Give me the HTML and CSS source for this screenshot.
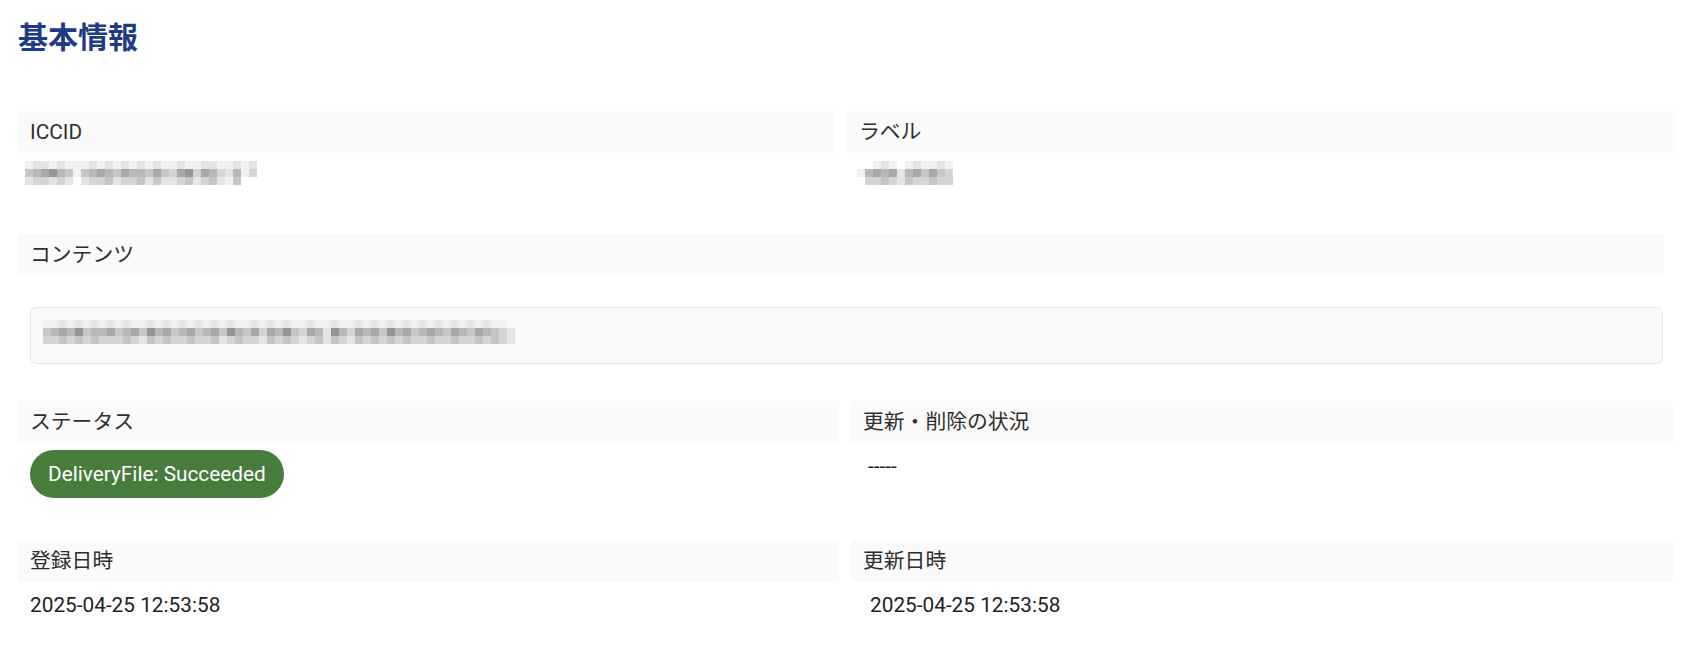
FILE: index.html
```html
<!DOCTYPE html>
<html lang="ja">
<head>
<meta charset="utf-8">
<title>基本情報</title>
<link rel="stylesheet" href="styles.css">
</head>
<body>
<div class="page">
  <h1 class="title">基本情報</h1>

  <div class="row row-a">
    <div class="field">
      <div class="label">ICCID</div>
      <div class="value pad-7">
        <div class="mosaic">
          <span class="mc t1 m4 b2"></span><span class="mc t2 m5 b3"></span><span class="mc t2 m6 b3"></span><span class="mc t1 m7 b2"></span><span class="mc t2 m5 b3"></span><span class="mc t1 m4 b2"></span><span class="mc t1 m1 b0"></span><span class="mc t1 m4 b2"></span><span class="mc t2 m5 b3"></span><span class="mc t1 m6 b3"></span><span class="mc t2 m5 b4"></span><span class="mc t1 m4 b2"></span><span class="mc t2 m6 b3"></span><span class="mc t1 m5 b3"></span><span class="mc t2 m5 b4"></span><span class="mc t1 m4 b2"></span><span class="mc t2 m6 b4"></span><span class="mc t1 m4 b2"></span><span class="mc t1 m3 b2"></span><span class="mc t2 m6 b3"></span><span class="mc t1 m7 b4"></span><span class="mc t1 m3 b2"></span><span class="mc t2 m6 b3"></span><span class="mc t2 m5 b4"></span><span class="mc t1 m3 b2"></span><span class="mc t1 m2 b1"></span><span class="mc t2 m5 b4"></span><span class="mc t1 m1 b0"></span><span class="mc t2 m3 b0"></span>
        </div>
      </div>
    </div>
    <div class="field">
      <div class="label">ラベル</div>
      <div class="value pad-10">
        <div class="mosaic">
          <span class="mc t0 m1 b0"></span><span class="mc t0 m5 b3"></span><span class="mc t1 m6 b3"></span><span class="mc t2 m5 b4"></span><span class="mc t1 m6 b3"></span><span class="mc t0 m2 b2"></span><span class="mc t1 m5 b4"></span><span class="mc t2 m6 b3"></span><span class="mc t1 m4 b3"></span><span class="mc t1 m6 b4"></span><span class="mc t2 m4 b3"></span><span class="mc t1 m3 b3"></span>
        </div>
      </div>
    </div>
  </div>

  <div class="field field-wide">
    <div class="label">コンテンツ</div>
    <div class="content-wrap">
      <div class="content-box">
        <div class="mosaic">
          <span class="mc t1 m4 b3"></span><span class="mc t1 m5 b3"></span><span class="mc t2 m6 b4"></span><span class="mc t1 m5 b3"></span><span class="mc t2 m7 b4"></span><span class="mc t1 m4 b3"></span><span class="mc t2 m5 b4"></span><span class="mc t1 m5 b3"></span><span class="mc t2 m6 b3"></span><span class="mc t1 m4 b3"></span><span class="mc t2 m5 b4"></span><span class="mc t1 m6 b3"></span><span class="mc t1 m4 b2"></span><span class="mc t2 m7 b4"></span><span class="mc t1 m5 b3"></span><span class="mc t2 m6 b4"></span><span class="mc t1 m4 b3"></span><span class="mc t2 m5 b3"></span><span class="mc t1 m6 b4"></span><span class="mc t2 m4 b3"></span><span class="mc t1 m5 b3"></span><span class="mc t2 m6 b4"></span><span class="mc t1 m4 b2"></span><span class="mc t2 m7 b3"></span><span class="mc t1 m5 b4"></span><span class="mc t1 m4 b3"></span><span class="mc t2 m6 b3"></span><span class="mc t1 m3 b2"></span><span class="mc t2 m6 b4"></span><span class="mc t1 m5 b3"></span><span class="mc t2 m7 b4"></span><span class="mc t1 m4 b3"></span><span class="mc t1 m3 b2"></span><span class="mc t2 m6 b3"></span><span class="mc t1 m5 b4"></span><span class="mc t1 m2 b2"></span><span class="mc t2 m7 b4"></span><span class="mc t1 m5 b3"></span><span class="mc t1 m3 b2"></span><span class="mc t2 m6 b4"></span><span class="mc t1 m5 b3"></span><span class="mc t2 m6 b4"></span><span class="mc t1 m4 b3"></span><span class="mc t2 m7 b4"></span><span class="mc t1 m5 b3"></span><span class="mc t2 m6 b4"></span><span class="mc t1 m4 b3"></span><span class="mc t2 m5 b3"></span><span class="mc t1 m6 b4"></span><span class="mc t2 m5 b3"></span><span class="mc t1 m4 b3"></span><span class="mc t2 m6 b4"></span><span class="mc t1 m5 b3"></span><span class="mc t2 m4 b3"></span><span class="mc t1 m6 b4"></span><span class="mc t2 m5 b3"></span><span class="mc t1 m4 b4"></span><span class="mc t1 m3 b3"></span><span class="mc t0 m2 b2"></span>
        </div>
      </div>
    </div>
  </div>

  <div class="row row-b">
    <div class="field">
      <div class="label">ステータス</div>
      <div class="value pad-12">
        <span class="badge">DeliveryFile: Succeeded</span>
      </div>
    </div>
    <div class="field">
      <div class="label">更新・削除の状況</div>
      <div class="value pad-17 text">-----</div>
    </div>
  </div>

  <div class="row row-b">
    <div class="field">
      <div class="label">登録日時</div>
      <div class="value pad-12 text">2025-04-25 12:53:58</div>
    </div>
    <div class="field">
      <div class="label">更新日時</div>
      <div class="value pad-19 text">2025-04-25 12:53:58</div>
    </div>
  </div>
</div>
</body>
</html>
```

FILE: styles.css
```css
html, body {
  margin: 0;
  padding: 0;
  background: #ffffff;
}

body {
  font-family: Roboto, "Noto Sans CJK JP", sans-serif;
  color: #2a2a2a;
}

.page {
  padding: 17px 0 0 18px;
}

.title {
  margin: 0 0 58px;
  font-family: "Noto Sans CJK JP", sans-serif;
  font-size: 30px;
  line-height: 36px;
  font-weight: 700;
  color: #1f3b85;
}

.row {
  display: grid;
  column-gap: 12px;
}

.row-a {
  grid-template-columns: 817px 829px;
}

.row-b {
  grid-template-columns: 821px 822px;
}

.field {
  margin-bottom: 42px;
}

.row-a .field {
  margin-bottom: 43px;
}

.field-wide {
  width: 1646px;
  margin-bottom: 37px;
}

.label {
  height: 42px;
  line-height: 42px;
  padding: 0 12px;
  background: #fafafa;
  font-size: 20.8px;
  color: #2e2e2e;
  white-space: nowrap;
}

.value {
  padding-top: 8px;
  min-height: 30px;
  display: flex;
  align-items: flex-start;
}

.value.text {
  font-size: 20.8px;
  line-height: 30px;
  color: #222222;
}

.pad-7 { padding-left: 7px; }
.pad-10 { padding-left: 10px; }
.pad-12 { padding-left: 12px; }
.pad-17 { padding-left: 17px; }
.pad-19 { padding-left: 19px; }

.content-wrap {
  padding: 31px 1px 0 12px;
}

.content-box {
  box-sizing: border-box;
  height: 57px;
  padding: 12px 12px 0;
  border: 1px solid #e6e6e6;
  border-radius: 6px;
  background: #fafafa;
}

.badge {
  display: inline-block;
  margin-top: -1px;
  height: 48px;
  line-height: 48px;
  padding: 0 18px;
  border-radius: 24px;
  background: #487c3d;
  color: #ffffff;
  font-size: 20.8px;
  white-space: nowrap;
}

/* pixelated (masked) values */
.mosaic {
  display: flex;
  height: 24px;
}

.mc {
  width: 8px;
  height: 24px;
  background: linear-gradient(to bottom, var(--t) 0 8px, var(--m) 8px 16px, var(--b) 16px 24px);
}

.t0 { --t: transparent; }
.t1 { --t: #f1f1f1; }
.t2 { --t: #e4e4e4; }
.t3 { --t: #d4d4d4; }

.m1 { --m: #f1f1f1; }
.m2 { --m: #e4e4e4; }
.m3 { --m: #d4d4d4; }
.m4 { --m: #c6c6c6; }
.m5 { --m: #b8b8b8; }
.m6 { --m: #a8a8a8; }
.m7 { --m: #959595; }

.b0 { --b: transparent; }
.b1 { --b: #f1f1f1; }
.b2 { --b: #e4e4e4; }
.b3 { --b: #d4d4d4; }
.b4 { --b: #c6c6c6; }
```
